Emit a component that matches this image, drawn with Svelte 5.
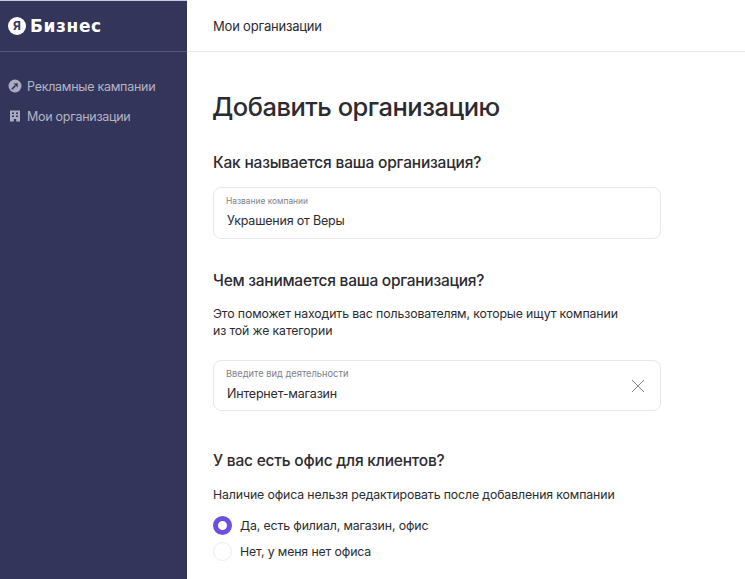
<script lang="ts">
    const menu = [
        { id: "ads", label: "Рекламные кампании" },
        { id: "orgs", label: "Мои организации" }
    ];
</script>

<div class="layout">
    <aside class="sidebar">
        <div class="logo">
            <span class="logo-mark">Я</span>
            <span class="logo-text">Бизнес</span>
        </div>
        <nav class="menu">
            {#each menu as item}
                <a class="menu-item" href="#{item.id}">
                    {#if item.id === "ads"}
                        <svg width="14" height="14" viewBox="0 0 14 14">
                            <circle cx="7" cy="7" r="6.5" fill="#a9abc0" />
                            <path d="M3.8 10.2 L7.4 6.6" stroke="#33355a" stroke-width="1.6" fill="none" />
                            <path d="M5.6 4.4 L9.8 4.2 L9.6 8.4 Z" fill="#33355a" />
                        </svg>
                    {:else}
                        <svg width="14" height="14" viewBox="0 0 14 14">
                            <path d="M2 1.5 H12 V12.5 H8.2 V10 H5.8 V12.5 H2 Z" fill="#a9abc0" />
                            <path d="M4 3.5 H6 V5 H4 Z M8 3.5 H10 V5 H8 Z M4 6.5 H6 V8 H4 Z M8 6.5 H10 V8 H8 Z" fill="#33355a" />
                        </svg>
                    {/if}
                    <span>{item.label}</span>
                </a>
            {/each}
        </nav>
    </aside>

    <div class="main">
        <header class="topbar">Мои организации</header>
        <main class="content">
            <h1>Добавить организацию</h1>

            <h2>Как называется ваша организация?</h2>
            <div class="field">
                <div class="field-label short">Название компании</div>
                <div class="field-value">Украшения от Веры</div>
            </div>

            <h2 class="second">Чем занимается ваша организация?</h2>
            <p class="hint">Это поможет находить вас пользователям, которые ищут компании<br />из той же категории</p>
            <div class="field lower">
                <div class="field-label">Введите вид деятельности</div>
                <div class="field-value">Интернет-магазин</div>
                <svg class="clear" width="16" height="16" viewBox="0 0 16 16">
                    <path d="M2 2 L14 14 M14 2 L2 14" stroke="#85868c" stroke-width="1" fill="none" />
                </svg>
            </div>

            <h2 class="third">У вас есть офис для клиентов?</h2>
            <p class="hint office">Наличие офиса нельзя редактировать после добавления компании</p>
            <div class="radio-row">
                <span class="radio checked"></span>
                <span>Да, есть филиал, магазин, офис</span>
            </div>
            <div class="radio-row">
                <span class="radio"></span>
                <span>Нет, у меня нет офиса</span>
            </div>
        </main>
    </div>
</div>

<style>
    :global(body) {
        margin: 0;
        background: #fff;
        overflow: hidden;
    }

    .layout {
        display: flex;
        width: 745px;
        height: 579px;
        overflow: hidden;
        font-family: Inter, "Noto Sans", sans-serif;
        color: #2b2b31;
    }

    .sidebar {
        width: 187px;
        flex-shrink: 0;
        background: #33355a;
        border-top: 1px solid #c9cadb;
        box-sizing: border-box;
    }

    .logo {
        display: flex;
        align-items: center;
        gap: 4px;
        height: 51px;
        padding-left: 8px;
        box-sizing: border-box;
        border-bottom: 1px solid #55577a;
    }

    .logo-mark {
        width: 18px;
        height: 18px;
        border-radius: 50%;
        background: #fff;
        color: #33355a;
        font-size: 12px;
        font-weight: 700;
        line-height: 18px;
        text-align: center;
    }

    .logo-text {
        color: #fff;
        font-family: "DejaVu Sans", Inter, sans-serif;
        font-size: 17px;
        font-weight: 700;
        letter-spacing: 0.6px;
    }

    .menu {
        display: flex;
        flex-direction: column;
        gap: 8px;
        padding-top: 23px;
    }

    .menu-item {
        display: flex;
        align-items: center;
        gap: 5px;
        height: 22px;
        padding-left: 8px;
        color: #b3b5c8;
        font-size: 12.5px;
        letter-spacing: -0.27px;
        text-decoration: none;
    }

    .main {
        flex: 1;
        min-width: 0;
    }

    .topbar {
        height: 52px;
        box-sizing: border-box;
        padding: 18px 0 0 26px;
        border-bottom: 1px solid #e8e8ea;
        font-size: 13px;
        line-height: 16px;
        letter-spacing: -0.2px;
    }

    .content {
        padding: 0 84px 0 26px;
    }

    h1 {
        margin: 0 0 0 -1px;
        padding-top: 39px;
        font-size: 25.5px;
        font-weight: 500;
        line-height: 32px;
        letter-spacing: -0.5px;
    }

    h2 {
        margin: 0;
        padding-top: 30px;
        font-size: 15.5px;
        font-weight: 500;
        line-height: 20px;
        letter-spacing: -0.2px;
    }

    h2.second {
        padding-top: 32px;
        letter-spacing: -0.26px;
    }

    h2.third {
        padding-top: 40px;
    }

    .field {
        position: relative;
        height: 52px;
        margin-top: 14px;
        box-sizing: border-box;
        padding: 7px 12px 0;
        border: 1px solid #e8e8ea;
        border-radius: 8px;
    }

    .field.lower {
        height: 51px;
        margin-top: 21px;
    }

    .field-label {
        font-size: 9.3px;
        line-height: 12px;
        color: #7e7f8c;
    }

    .field-label.short {
        font-size: 8.4px;
    }

    .field-value {
        margin-top: 6px;
        padding-left: 1px;
        font-size: 12.5px;
        line-height: 16px;
        letter-spacing: -0.2px;
    }

    .clear {
        position: absolute;
        top: 17px;
        right: 14px;
    }

    .hint {
        margin: 14px 0 0;
        font-size: 12.3px;
        line-height: 17px;
        letter-spacing: -0.12px;
    }

    .hint.office {
        margin-top: 15px;
        margin-bottom: 9px;
    }

    .radio-row {
        display: flex;
        align-items: center;
        gap: 8px;
        height: 26px;
        font-size: 12.3px;
        letter-spacing: -0.12px;
    }

    .radio {
        width: 17px;
        height: 17px;
        border-radius: 50%;
        border: 1px solid #eeeeef;
    }

    .radio.checked {
        width: 9px;
        height: 9px;
        border: 5px solid #6b4fe0;
    }
</style>
